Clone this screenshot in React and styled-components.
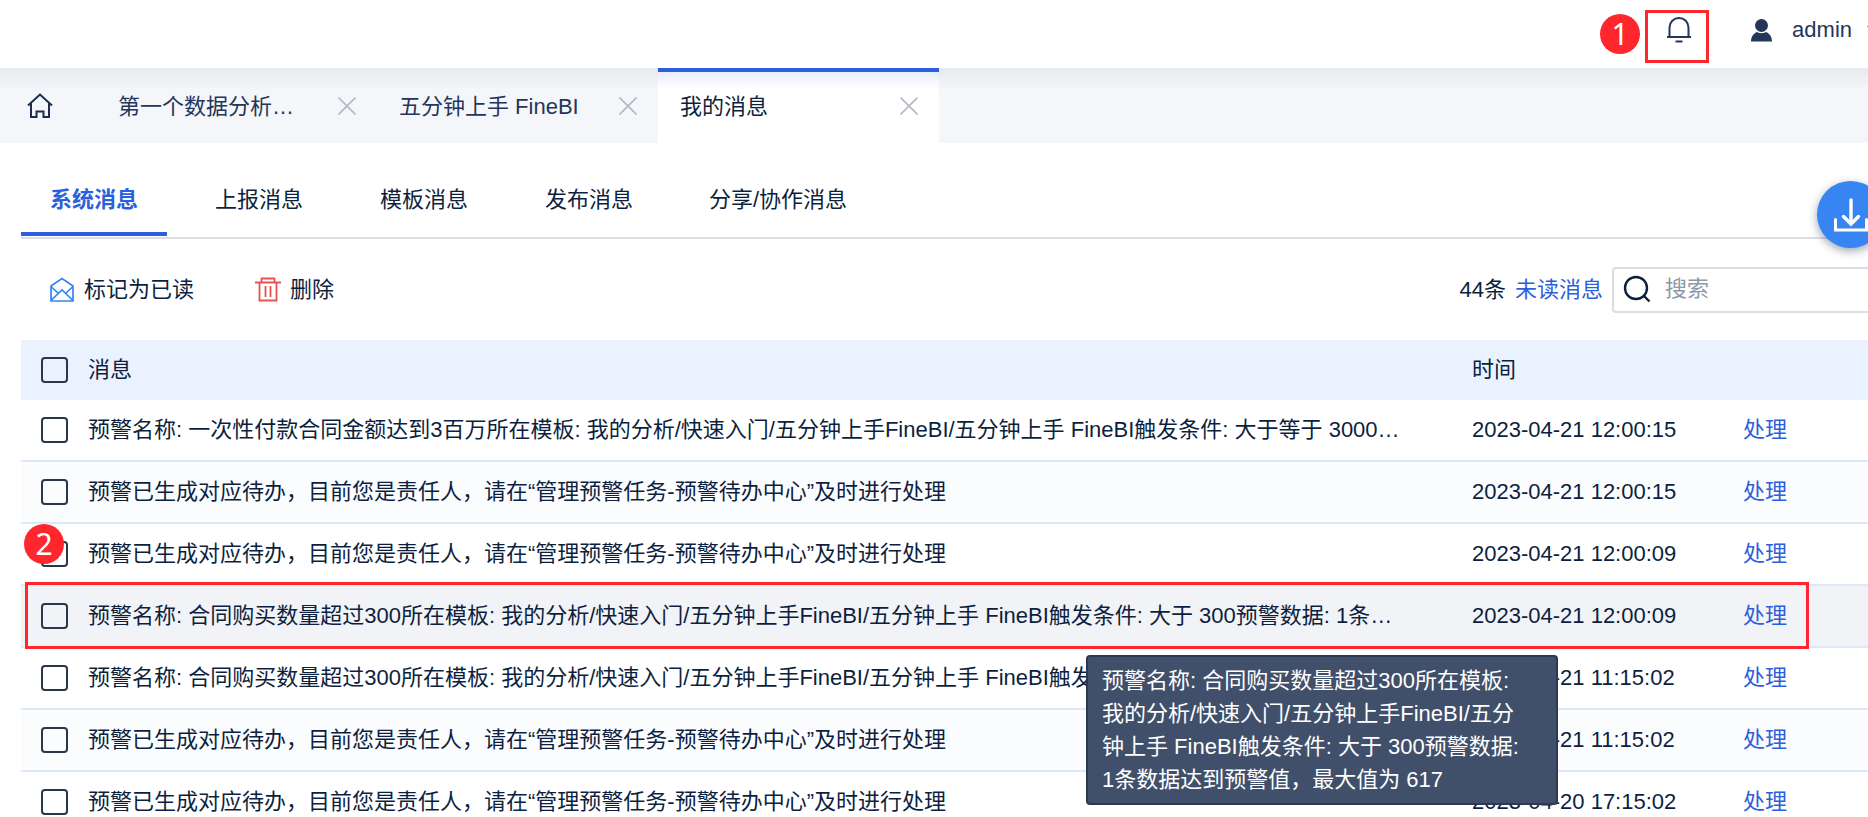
import React from 'react';
import styled, { createGlobalStyle } from 'styled-components';

const GlobalStyle = createGlobalStyle`
  *, *::before, *::after { box-sizing: border-box; }
  body {
    margin: 0;
    background: #fff;
    color: #0d1f3e;
    font: 400 22px/32px "Liberation Sans", "Noto Sans CJK SC", sans-serif;
  }
  button, input { font: inherit; color: inherit; }
  button { border: 0; padding: 0; background: none; cursor: pointer; }
  a { color: #2c5fdd; text-decoration: none; }
  svg { display: block; flex: none; }
`;

const Page = styled.div`
  position: relative;
  display: flex;
  flex-direction: column;
  height: 100vh;
  overflow: hidden;
`;

const Header = styled.header`
  display: flex;
  align-items: flex-start;
  justify-content: flex-end;
  height: 68px;
  flex: none;
  padding-top: 10px;
`;

const StepBadge = styled.span`
  display: flex;
  align-items: center;
  justify-content: center;
  width: 40px;
  height: 40px;
  border-radius: 50%;
  background: #ff272d;
  color: #fff;
  font: 400 30px/40px "Noto Sans", sans-serif;
`;

const HeaderStep = styled(StepBadge)`
  margin: 4px 5px 0 0;
`;

const RowStep = styled(StepBadge)`
  position: absolute;
  left: 3px;
  top: 0;
`;

const BellButton = styled.button`
  display: flex;
  justify-content: center;
  width: 64px;
  height: 53px;
  padding: 4px 0 0 3px;
  border: 3px solid #ff272d;
`;

const UserButton = styled.button`
  display: flex;
  align-items: center;
  height: 40px;
  margin-left: 42px;
  color: #24365a;
`;

const UserName = styled.span`
  margin: 0 14px 0 20px;
`;

const CaretClip = styled.span`
  width: 2px;
  overflow: hidden;
`;

const TabBar = styled.nav`
  display: flex;
  flex: none;
  height: 75px;
  background: #f5f6fa linear-gradient(#e6e9ee, #f5f6fa 22px);
`;

const HomeButton = styled.button`
  width: 96px;
  padding: 0 0 0 27px;
`;

const Tab = styled.div`
  display: flex;
  align-items: center;
  justify-content: space-between;
  width: 281px;
  padding: 0 21px 2px 22px;
  border-top: 4px solid ${(p) => (p.$active ? '#2c5fdd' : 'transparent')};
  background: ${(p) => (p.$active ? 'linear-gradient(#e6edfa, #fff 16px)' : 'none')};
  color: ${(p) => (p.$active ? '#0d1f3e' : '#24365a')};
`;

const CloseButton = styled.button`
  padding-bottom: 2px;
`;

const Content = styled.main`
  display: flex;
  flex-direction: column;
  flex: none;
  padding-left: 21px;
`;

const SubTabs = styled.div`
  display: flex;
  gap: 19px;
  height: 96px;
  border-bottom: 2px solid #dcdee4;
`;

const SubTab = styled.button`
  min-width: 146px;
  height: 93px;
  padding: 24px 28px 0;
  border-bottom: 4px solid ${(p) => (p.$active ? '#2c5fdd' : 'transparent')};
  color: ${(p) => (p.$active ? '#2c5fdd' : 'inherit')};
  font-weight: ${(p) => (p.$active ? 700 : 400)};
`;

const Toolbar = styled.div`
  display: flex;
  align-items: center;
  height: 101px;
  padding-left: 28px;
`;

const ToolButton = styled.button`
  display: flex;
  align-items: center;
  gap: 9px;
  margin-right: 61px;
`;

const Unread = styled.div`
  display: flex;
  gap: 9px;
  margin: 0 9px 0 auto;
`;

const SearchBox = styled.label`
  display: flex;
  align-items: center;
  gap: 14px;
  width: 256px;
  height: 46px;
  padding: 0 0 2px 9px;
  border: 2px solid #d9dde4;
  border-right: 0;
  border-radius: 4px 0 0 4px;
`;

const SearchInput = styled.input`
  flex: 1;
  min-width: 0;
  padding: 0;
  border: 0;
  outline: 0;
  background: none;
  &::placeholder { color: #8d98a7; opacity: 1; }
`;

const Table = styled.table`
  width: 100%;
  table-layout: fixed;
  border-collapse: separate;
  border-spacing: 0;
  text-align: left;
`;

const HeadRow = styled.tr`
  height: 60px;
  background: #eaf2ff;
`;

const Row = styled.tr`
  position: relative;
  height: 62px;
  background: ${(p) => (p.$hovered ? '#f2f3f7' : p.$striped ? '#fbfcfe' : '#fff')};
  & > td { border-bottom: 2px solid #dde9fb; }
`;

const HeadCell = styled.th`
  width: ${(p) => p.$width || 'auto'};
  padding: 0 0 0 ${(p) => p.$indent || '0'};
  font-weight: inherit;
`;

const CheckCell = styled.td`
  padding: 0 0 0 20px;
`;

const MessageCell = styled.td`
  padding: 0 64px 0 0;
  overflow: hidden;
  white-space: nowrap;
`;

const MessageText = styled.div`
  overflow: hidden;
  text-overflow: ellipsis;
`;

const PlainCell = styled.td`
  padding: 0;
  white-space: nowrap;
`;

const Checkbox = styled.input.attrs({ type: 'checkbox' })`
  appearance: none;
  display: block;
  width: 27px;
  height: 26px;
  margin: 0;
  border: 2px solid #29364c;
  border-radius: 4px;
`;

const RowOutline = styled.span`
  position: absolute;
  z-index: 1;
  inset: -4px 59px -1px 4px;
  border: 3px solid #ff272d;
  pointer-events: none;
`;

const Tooltip = styled.div`
  position: absolute;
  z-index: 2;
  top: 69px;
  right: 310px;
  width: 472px;
  padding: 7px 28px 7px 14px;
  border: 2px solid #2b3a52;
  border-radius: 4px;
  background: #40506a;
  color: #fff;
  line-height: 33px;
`;

const DownloadButton = styled.button`
  position: absolute;
  top: 181px;
  right: -16px;
  display: flex;
  align-items: center;
  justify-content: center;
  width: 67px;
  height: 67px;
  border-radius: 50%;
  background: #3685f2;
  box-shadow: 0 3px 10px rgba(30, 50, 80, 0.45);
`;

const Bell = () => (
  <svg width="24" height="26" viewBox="0 0 24 26" fill="none" stroke="#24365a" strokeWidth="2">
    <path d="M2.500 20V10.500a9.500 9.500 0 0 1 19 0V20M0 20h24M8.500 24.500h7" />
  </svg>
);

const Person = () => (
  <svg width="21" height="23" viewBox="0 0 21 23" fill="#24365a">
    <circle cx="10.500" cy="6.500" r="6.500" />
    <path d="M0 22.500c0-5 3-8.500 6-9.500 2.500 1.600 6.500 1.600 9 0 3 1 6 4.500 6 9.500z" />
  </svg>
);

const House = () => (
  <svg width="26" height="26" viewBox="0 0 26 26" fill="none" stroke="#1c2d4d" strokeWidth="2">
    <path d="M1 12.500L13 1.500l12 11M4 10.500V24h5.500v-5.500h7V24H22V10.500" />
  </svg>
);

const Cross = () => (
  <svg width="18" height="18" viewBox="0 0 18 18" stroke="#b3b9c4" strokeWidth="1.600">
    <path d="M.5.5l17 17M17.500.5l-17 17" />
  </svg>
);

const OpenMail = () => (
  <svg width="26" height="26" viewBox="0 0 26 26" fill="none" stroke="#3685f2" strokeWidth="1.700">
    <path d="M2 9L13 1.500 24 9v15H2zM2 9.500l7.500 7M24 9.500l-7.500 7M2 23.500L13 13l11 10.500" />
  </svg>
);

const Trash = () => (
  <svg width="26" height="26" viewBox="0 0 26 26" fill="none" stroke="#e65251" strokeWidth="1.800">
    <path d="M0 5.500h26M6.500 5V1.500h13V5M4.500 5.500V23.500h17V5.500M10.500 9v11M15.500 9v11" />
  </svg>
);

const Magnifier = () => (
  <svg width="28" height="28" viewBox="0 0 28 28" fill="none" stroke="#0d1f3e" strokeWidth="2.400">
    <circle cx="13" cy="13" r="11" />
    <path d="M20.500 20.500l6 6" />
  </svg>
);

const DownloadGlyph = () => (
  <svg width="36" height="34" viewBox="0 0 36 34" fill="none" stroke="#fff" strokeWidth="3.400" strokeLinecap="round">
    <path d="M18 2v23M10.500 18.500L18 26l7.500-7.500" />
    <path d="M2.500 21.500V32h31V21.500" strokeWidth="3" />
  </svg>
);

const openTabs = [
  { label: '第一个数据分析…' },
  { label: '五分钟上手 FineBI' },
  { label: '我的消息', active: true },
];

const categories = ['系统消息', '上报消息', '模板消息', '发布消息', '分享/协作消息'];

const todo = '预警已生成对应待办，目前您是责任人，请在“管理预警任务-预警待办中心”及时进行处理';
const overLimit =
  '预警名称: 合同购买数量超过300所在模板: 我的分析/快速入门/五分钟上手FineBI/五分钟上手 FineBI触发条件: 大于 300预警数据: 1条数据达到预警值，最大值为 617';
const payment =
  '预警名称: 一次性付款合同金额达到3百万所在模板: 我的分析/快速入门/五分钟上手FineBI/五分钟上手 FineBI触发条件: 大于等于 3000000预警数据';

const messages = [
  { text: payment, time: '2023-04-21 12:00:15' },
  { text: todo, time: '2023-04-21 12:00:15' },
  { text: todo, time: '2023-04-21 12:00:09', step: 2 },
  { text: overLimit, time: '2023-04-21 12:00:09', hovered: true },
  { text: overLimit, time: '2023-04-21 11:15:02' },
  { text: todo, time: '2023-04-21 11:15:02' },
  { text: todo, time: '2023-04-20 17:15:02' },
];

export default function App() {
  return (
    <Page>
      <GlobalStyle />
      <Header>
        <HeaderStep>1</HeaderStep>
        <BellButton aria-label="消息提醒"><Bell /></BellButton>
        <UserButton>
          <Person />
          <UserName>admin</UserName>
          <CaretClip>
            <svg width="12" height="8" viewBox="0 0 12 8" fill="#24365a"><path d="M1 0h11L6.500 7z" /></svg>
          </CaretClip>
        </UserButton>
      </Header>
      <TabBar>
        <HomeButton aria-label="首页"><House /></HomeButton>
        {openTabs.map((tab) => (
          <Tab key={tab.label} $active={tab.active}>
            <span>{tab.label}</span>
            <CloseButton aria-label="关闭"><Cross /></CloseButton>
          </Tab>
        ))}
      </TabBar>
      <Content>
        <SubTabs>
          {categories.map((name, i) => (
            <SubTab key={name} $active={i === 0}>{name}</SubTab>
          ))}
        </SubTabs>
        <Toolbar>
          <ToolButton><OpenMail />标记为已读</ToolButton>
          <ToolButton><Trash />删除</ToolButton>
          <Unread>
            <span>44条</span>
            <a href="#unread">未读消息</a>
          </Unread>
          <SearchBox>
            <Magnifier />
            <SearchInput type="text" placeholder="搜索" aria-label="搜索" />
          </SearchBox>
        </Toolbar>
        <Table>
          <thead>
            <HeadRow>
              <HeadCell $width="67px" $indent="20px"><Checkbox aria-label="全选" /></HeadCell>
              <HeadCell>消息</HeadCell>
              <HeadCell $width="271px">时间</HeadCell>
              <HeadCell $width="125px" aria-label="操作" />
            </HeadRow>
          </thead>
          <tbody>
            {messages.map((m, i) => (
              <Row key={i} $striped={i % 2 === 1} $hovered={m.hovered}>
                <CheckCell>
                  <Checkbox aria-label="选择消息" />
                  {m.step && <RowStep>{m.step}</RowStep>}
                  {m.hovered && <RowOutline />}
                  {m.hovered && <Tooltip role="tooltip">{m.text}</Tooltip>}
                </CheckCell>
                <MessageCell><MessageText>{m.text}</MessageText></MessageCell>
                <PlainCell>{m.time}</PlainCell>
                <PlainCell><a href="#handle">处理</a></PlainCell>
              </Row>
            ))}
          </tbody>
        </Table>
      </Content>
      <DownloadButton aria-label="下载"><DownloadGlyph /></DownloadButton>
    </Page>
  );
}
